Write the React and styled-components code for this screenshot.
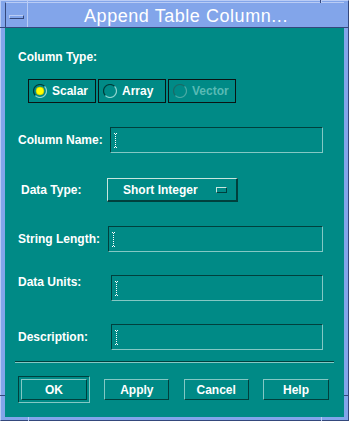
import React from 'react';
import styled, { createGlobalStyle } from 'styled-components';

const teal = '#008a86';
const tealDark = '#00403d';
const tealLight = '#84c8c4';
const frame = '#82a5ea';
const frameLight = '#b9ccf5';
const frameDark = '#34487c';

const GlobalStyle = createGlobalStyle`
  html, body {
    margin: 0;
    padding: 0;
    background: ${frame};
  }
  * {
    box-sizing: border-box;
  }
`;

const Frame = styled.div`
  position: relative;
  width: 349px;
  height: 421px;
  background: ${frame};
  border-top: 1px solid ${frameLight};
  border-left: 1px solid ${frameLight};
  border-right: 1px solid ${frameDark};
  border-bottom: 1px solid ${frameDark};
  padding: 1px 4px 3px 4px;
  display: flex;
  flex-direction: column;
  font-family: 'Liberation Sans', Arial, sans-serif;
`;

const Tick = styled.span`
  position: absolute;
  background: ${(p) => (p.$dark ? frameDark : frameLight)};
  left: ${(p) => p.$x}px;
  top: ${(p) => p.$y}px;
  width: ${(p) => p.$w}px;
  height: ${(p) => p.$h}px;
`;

const TitleBar = styled.div`
  height: 26px;
  display: flex;
  border-top: 1px solid ${frameLight};
  border-bottom: 1px solid ${frameDark};
  border-left: 1px solid ${frameDark};
`;

const MenuButton = styled.div`
  width: 21px;
  display: flex;
  align-items: center;
  padding-left: 3px;
  padding-top: 3px;
`;

const MenuBar = styled.span`
  display: block;
  width: 15px;
  height: 4px;
  border-top: 1px solid ${frameLight};
  border-left: 1px solid ${frameLight};
  border-right: 1px solid ${frameDark};
  border-bottom: 1px solid ${frameDark};
`;

const Title = styled.div`
  flex: 1;
  border-left: 1px solid ${frameLight};
  color: #ffffff;
  font-size: 18px;
  letter-spacing: 0.55px;
  line-height: 25px;
  text-align: center;
  padding-top: 1px;
`;

const Content = styled.div`
  flex: 1;
  background: ${teal};
  display: flex;
  flex-direction: column;
  padding-top: 22px;
  color: #ffffff;
  font-size: 12px;
  font-weight: bold;
`;

const Label = styled.div`
  line-height: 14px;
  white-space: nowrap;
  width: ${(p) => (p.$width ? `${p.$width}px` : 'auto')};
  flex-shrink: 0;
  align-self: ${(p) => (p.$top ? 'flex-start' : 'center')};
`;

const Section = styled.div`
  padding-left: 13px;
`;

const RadioGroup = styled.div`
  display: flex;
  gap: 2px;
  margin: 15px 0 0 23px;
`;

const RadioBox = styled.div`
  width: 68px;
  height: 24px;
  border: 1px solid #0a1414;
  display: flex;
  align-items: center;
  padding-left: 4px;
  gap: 5px;
  color: ${(p) => (p.$disabled ? '#58bab5' : '#ffffff')};
  svg {
    flex-shrink: 0;
  }
`;

const Row = styled.div`
  display: flex;
  align-items: center;
  padding-left: ${(p) => p.$pad || 13}px;
  margin-top: ${(p) => p.$mt}px;
`;

const TextField = styled.div`
  width: ${(p) => p.$width}px;
  height: 26px;
  background: ${teal};
  border-top: 1px solid ${tealDark};
  border-left: 1px solid ${tealDark};
  border-right: 1px solid ${tealLight};
  border-bottom: 1px solid ${tealLight};
  padding: 5px 0 0 3px;
`;

const OptionMenu = styled.div`
  width: 131px;
  height: 24px;
  display: flex;
  align-items: center;
  border-top: 1px solid #c8e6de;
  border-left: 1px solid #c8e6de;
  border-right: 2px solid ${tealDark};
  border-bottom: 2px solid ${tealDark};
  padding-left: 15px;
  padding-right: 9px;
  justify-content: space-between;
`;

const OptionIndicator = styled.span`
  display: block;
  width: 11px;
  height: 6px;
  border-top: 1px solid #c8e6de;
  border-left: 1px solid #c8e6de;
  border-right: 1px solid ${tealDark};
  border-bottom: 1px solid ${tealDark};
`;

const Separator = styled.div`
  margin: 11px 10px 0 10px;
  height: 2px;
  border-top: 1px solid ${tealDark};
  border-bottom: 1px solid ${tealLight};
`;

const ButtonRow = styled.div`
  display: flex;
  align-items: center;
  justify-content: space-between;
  padding: 0 15px 0 13px;
  margin-top: 13px;
`;

const DefaultRing = styled.div`
  width: 72px;
  height: 27px;
  padding: 2px;
  border-top: 1px solid ${tealDark};
  border-left: 1px solid ${tealDark};
  border-right: 1px solid ${tealLight};
  border-bottom: 1px solid ${tealLight};
`;

const Button = styled.button`
  width: ${(p) => p.$width || 65}px;
  height: 21px;
  background: ${teal};
  color: #ffffff;
  font-family: inherit;
  font-size: 12px;
  font-weight: bold;
  padding: 0;
  border-top: 1px solid ${tealLight};
  border-left: 1px solid ${tealLight};
  border-right: 1px solid ${tealDark};
  border-bottom: 1px solid ${tealDark};
  cursor: pointer;
`;

const IBeam = () => (
  <svg width="3" height="15" viewBox="0 0 3 15" shapeRendering="crispEdges">
    <rect x="0" y="0" width="1" height="1" fill="#fff" />
    <rect x="2" y="0" width="1" height="1" fill="#fff" />
    <line x1="1.5" y1="1" x2="1.5" y2="14" stroke="#fff" strokeWidth="1" strokeDasharray="1 1" />
    <rect x="0" y="14" width="1" height="1" fill="#fff" />
    <rect x="2" y="14" width="1" height="1" fill="#fff" />
  </svg>
);

const RadioMark = ({ checked, disabled }) => {
  const dark = disabled ? '#1b6a66' : '#003c39';
  const light = disabled ? '#4aa9a4' : '#8fd4cf';
  return (
    <svg width="14" height="14" viewBox="0 0 14 14">
      <path d="M2.4 11.6 A6.5 6.5 0 0 1 11.6 2.4" fill="none" stroke={dark} strokeWidth="1.2" />
      <path d="M11.6 2.4 A6.5 6.5 0 0 1 2.4 11.6" fill="none" stroke={light} strokeWidth="1.2" />
      {checked && <circle cx="7" cy="7" r="4" fill="#ffff00" stroke="#b8b800" strokeWidth="0.6" />}
    </svg>
  );
};

const Field = ({ label, x, width, mt, top }) => (
  <Row $mt={mt}>
    <Label $width={x - 18} $top={top}>
      {label}
    </Label>
    <TextField $width={width}>
      <IBeam />
    </TextField>
  </Row>
);

export default function App() {
  return (
    <>
      <GlobalStyle />
      <Frame>
        <Tick $x={26} $y={-1} $w={1} $h={3} />
        <Tick $x={319} $y={-1} $w={1} $h={3} $dark />
        <Tick $x={320} $y={-1} $w={1} $h={3} />
        <Tick $x={-1} $y={26} $w={5} $h={1} $dark />
        <Tick $x={343} $y={26} $w={5} $h={1} $dark />
        <Tick $x={-1} $y={394} $w={5} $h={1} $dark />
        <Tick $x={343} $y={394} $w={5} $h={1} $dark />
        <Tick $x={27} $y={416} $w={1} $h={4} />
        <Tick $x={320} $y={416} $w={1} $h={4} />
        <TitleBar>
          <MenuButton>
            <MenuBar />
          </MenuButton>
          <Title>Append Table Column...</Title>
        </TitleBar>
        <Content>
          <Section>
            <Label>Column Type:</Label>
          </Section>
          <RadioGroup>
            <RadioBox>
              <RadioMark checked />
              Scalar
            </RadioBox>
            <RadioBox>
              <RadioMark />
              Array
            </RadioBox>
            <RadioBox $disabled>
              <RadioMark disabled />
              Vector
            </RadioBox>
          </RadioGroup>

          <Field label="Column Name:" x={110} width={213} mt={24} />

          <Row $mt={25} $pad={16}>
            <Label $width={86}>Data Type:</Label>
            <OptionMenu>
              Short Integer
              <OptionIndicator />
            </OptionMenu>
          </Row>

          <Field label="String Length:" x={108} width={215} mt={24} />
          <Field label="Data Units:" x={111} width={212} mt={23} top />
          <Field label="Description:" x={111} width={212} mt={23} />

          <Separator />

          <ButtonRow>
            <DefaultRing>
              <Button $width={66}>OK</Button>
            </DefaultRing>
            <Button>Apply</Button>
            <Button>Cancel</Button>
            <Button $width={66}>Help</Button>
          </ButtonRow>
        </Content>
      </Frame>
    </>
  );
}
